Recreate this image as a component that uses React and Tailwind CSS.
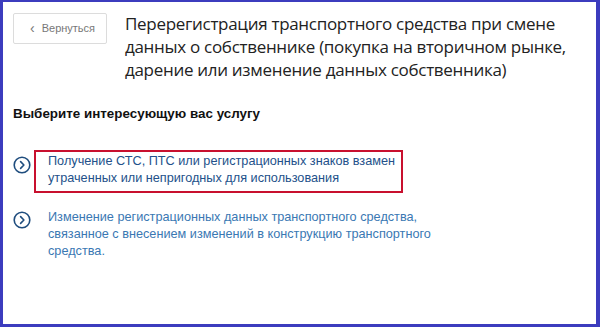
import React from "react";

const Chevron = ({ className }) => (
  <svg viewBox="0 0 18 18" className={className} fill="none">
    <circle cx="9" cy="9" r="7.8" stroke="currentColor" strokeWidth="1.6" />
    <path d="M7.6 5.6 L10.9 9 L7.6 12.4" stroke="currentColor" strokeWidth="1.6" strokeLinecap="round" strokeLinejoin="round" />
  </svg>
);

const App = () => {
  return (
    <main className="w-[600px] h-[327px] bg-white border-l-[3px] border-t-[2px] border-r-[4px] border-b-[3px] border-[#3c3cbe] overflow-hidden font-['Liberation_Sans',Arial,sans-serif]">
      {/* Header */}
      <div className="flex items-start pl-[10px] pt-[11px]">
        <button className="w-[94px] h-[31px] shrink-0 flex items-center gap-[7px] pl-[16px] border border-[#dcdcdc] rounded-[2px] text-[11px] text-[#777] whitespace-nowrap">
          <span className="text-[14px] leading-none -mt-[2px]">‹</span>
          <span>Вернуться</span>
        </button>
        <h1 className="ml-[18px] -mt-[1px] text-[17px] tracking-[-0.3px] leading-[23px] text-[#222] whitespace-nowrap font-['Open_Sans',sans-serif]">
          Перерегистрация транспортного средства при смене
          <br />
          данных о собственнике (покупка на вторичном рынке,
          <br />
          дарение или изменение данных собственника)
        </h1>
      </div>

      {/* Services */}
      <div className="pl-[10px] pt-[25px]">
        <h2 className="text-[13.4px] font-bold text-[#111] leading-[16px]">
          Выберите интересующую вас услугу
        </h2>

        <div className="flex items-start mt-[28px]">
          <Chevron className="w-[18px] h-[18px] mt-[6px] text-[#1f4d7e]" />
          <div className="ml-[3px] w-[369px] h-[43px] border-2 border-[#c8102e] pl-[12px] pt-[1px] text-[12.7px] leading-[17px] text-[#23518a] whitespace-nowrap">
            Получение СТС, ПТС или регистрационных знаков взамен
            <br />
            утраченных или непригодных для использования
          </div>
        </div>

        <div className="flex items-start mt-[16px]">
          <Chevron className="w-[18px] h-[18px] mt-[2px] text-[#1f4d7e]" />
          <p className="ml-[17px] text-[12.7px] leading-[17px] text-[#3a78b3] whitespace-nowrap">
            Изменение регистрационных данных транспортного средства,
            <br />
            связанное с внесением изменений в конструкцию транспортного
            <br />
            средства.
          </p>
        </div>
      </div>
    </main>
  );
};

export default App;
